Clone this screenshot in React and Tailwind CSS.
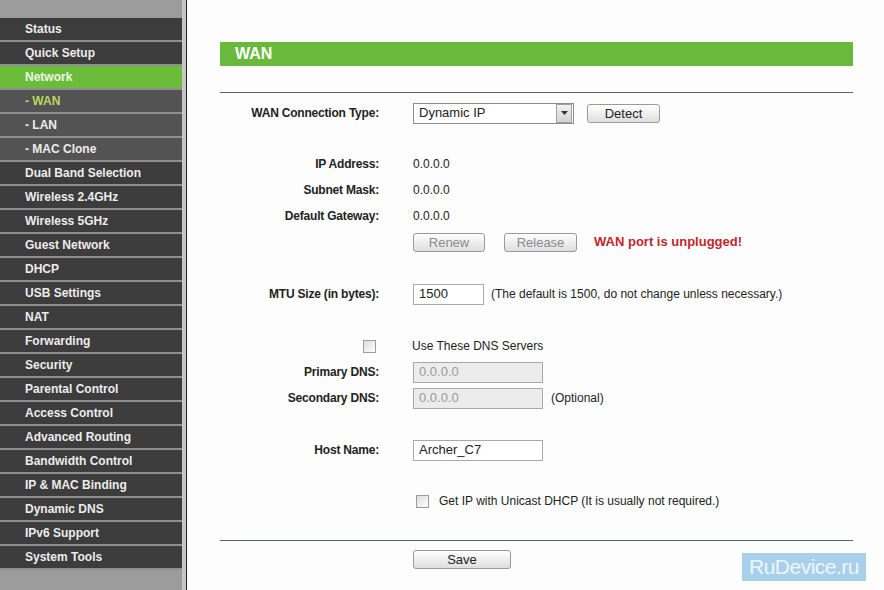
import React from 'react'

const menu = [
  { name: 'Status' },
  { name: 'Quick Setup' },
  { name: 'Network', active: true },
  { name: '- WAN', sub: true, current: true },
  { name: '- LAN', sub: true },
  { name: '- MAC Clone', sub: true },
  { name: 'Dual Band Selection' },
  { name: 'Wireless 2.4GHz' },
  { name: 'Wireless 5GHz' },
  { name: 'Guest Network' },
  { name: 'DHCP' },
  { name: 'USB Settings' },
  { name: 'NAT' },
  { name: 'Forwarding' },
  { name: 'Security' },
  { name: 'Parental Control' },
  { name: 'Access Control' },
  { name: 'Advanced Routing' },
  { name: 'Bandwidth Control' },
  { name: 'IP & MAC Binding' },
  { name: 'Dynamic DNS' },
  { name: 'IPv6 Support' },
  { name: 'System Tools' },
]

function Btn({ children, w, disabled }) {
  return (
    <button
      className={`h-[19px] ${w} rounded-[3px] border border-[#9a9a9a] bg-gradient-to-b from-white to-[#dedede] text-[13px] leading-none ${
        disabled ? 'text-[#8a8a8a]' : 'text-[#222]'
      }`}
    >
      {children}
    </button>
  )
}

function Check() {
  return <span className="block w-[13px] h-[13px] border border-[#9c9c9c] bg-gradient-to-br from-[#dcdcdc] to-white" />
}

function Row({ label, children, className = 'h-[22px]' }) {
  return (
    <div className={`flex items-center ${className}`}>
      <div className="w-[159px] shrink-0 text-right font-bold text-[#222] tracking-[-0.2px]">{label}</div>
      <div className="ml-[34px] flex items-center">{children}</div>
    </div>
  )
}

function Input({ value, w = 'w-[130px]', disabled }) {
  return (
    <div
      className={`${w} h-[21px] border border-[#a9a9a9] flex items-center px-[5px] text-[13px] ${
        disabled ? 'bg-[#ececec] text-[#9a9a9a]' : 'bg-white text-[#222]'
      }`}
    >
      {value}
    </div>
  )
}

export default function App() {
  return (
    <div className="flex w-[884px] h-[590px] overflow-hidden bg-[#fdfdfd] text-[12px] text-[#222]" style={{ fontFamily: '"Liberation Sans", Arial, sans-serif' }}>
      <div className="flex shrink-0">
        <div className="w-[182px] bg-[#9c9c9c] pt-[18px]">
          {menu.map(m => (
            <div
              key={m.name}
              className={`h-[24px] border-b-2 border-[#8e8e8e] pl-[25px] flex items-center font-bold ${
                m.active ? 'bg-[#6cbc3c] text-[#eef7e6]' : m.sub ? 'bg-[#535353]' : 'bg-[#3c3c3c]'
              } ${m.current ? 'text-[#b8d95c]' : m.active ? '' : 'text-[#ececec]'}`}
            >
              {m.name}
            </div>
          ))}
        </div>
        <div className="w-[4px] bg-[#c6c6c6]" />
        <div className="w-[1px] bg-[#1e1e1e]" />
      </div>

      <div className="relative flex-1 pl-[33px] pt-[42px]">
        <div className="w-[633px]">
          <div className="h-[24px] bg-[#6ab83c] flex items-center pl-[15px] text-white font-bold text-[16px]">WAN</div>
          <div className="mt-[26px] border-t border-[#4e6d5d]" />

          <Row label="WAN Connection Type:" className="h-[22px] mt-[9px]">
            <div className="w-[161px] h-[21px] border border-[#8c8c8c] bg-white flex items-center">
              <span className="flex-1 pl-[5px] text-[13px]">Dynamic IP</span>
              <span className="w-[16px] h-[19px] mr-[1px] border border-[#a0a0a0] bg-gradient-to-b from-[#f2f2f2] to-[#d4d4d4] flex items-center justify-center">
                <svg width="7" height="4" viewBox="0 0 7 4"><path d="M0 0h7L3.5 4z" fill="#333" /></svg>
              </span>
            </div>
            <span className="ml-[13px]"><Btn w="w-[73px]">Detect</Btn></span>
          </Row>

          <div className="mt-[27px]">
            <Row label="IP Address:" className="h-[26px]">0.0.0.0</Row>
            <Row label="Subnet Mask:" className="h-[26px]">0.0.0.0</Row>
            <Row label="Default Gateway:" className="h-[26px]">0.0.0.0</Row>
            <Row label="" className="h-[26px]">
              <Btn w="w-[72px]" disabled>Renew</Btn>
              <span className="ml-[19px]"><Btn w="w-[73px]" disabled>Release</Btn></span>
              <span className="ml-[17px] text-[#c1272d] font-bold text-[13px]">WAN port is unplugged!</span>
            </Row>
          </div>

          <Row label="MTU Size (in bytes):" className="h-[22px] mt-[28px]">
            <Input value="1500" w="w-[71px]" />
            <span className="ml-[7px]">(The default is 1500, do not change unless necessary.)</span>
          </Row>

          <div className="flex items-center h-[22px] mt-[30px]">
            <div className="w-[159px] shrink-0 flex justify-end pr-[3px]"><Check /></div>
            <div className="ml-[33px]">Use These DNS Servers</div>
          </div>
          <Row label="Primary DNS:" className="h-[22px] mt-[4px]">
            <Input value="0.0.0.0" disabled />
          </Row>
          <Row label="Secondary DNS:" className="h-[22px] mt-[4px]">
            <Input value="0.0.0.0" disabled />
            <span className="ml-[8px]">(Optional)</span>
          </Row>

          <Row label="Host Name:" className="h-[22px] mt-[30px]">
            <Input value="Archer_C7" />
          </Row>

          <Row label="" className="h-[22px] mt-[29px]">
            <span className="ml-[3px]"><Check /></span>
            <span className="ml-[10px]">Get IP with Unicast DHCP (It is usually not required.)</span>
          </Row>

          <div className="mt-[28px] border-t border-[#4e6d5d]" />
          <div className="mt-[9px] ml-[193px]">
            <Btn w="w-[98px]">Save</Btn>
          </div>
        </div>

        <div className="absolute left-[555px] top-[553px] w-[124px] h-[28px] bg-[#a9d0ea] flex items-center justify-center text-[#eef6fb] text-[21px] tracking-[-0.5px]">
          RuDevice.ru
        </div>
      </div>
    </div>
  )
}
